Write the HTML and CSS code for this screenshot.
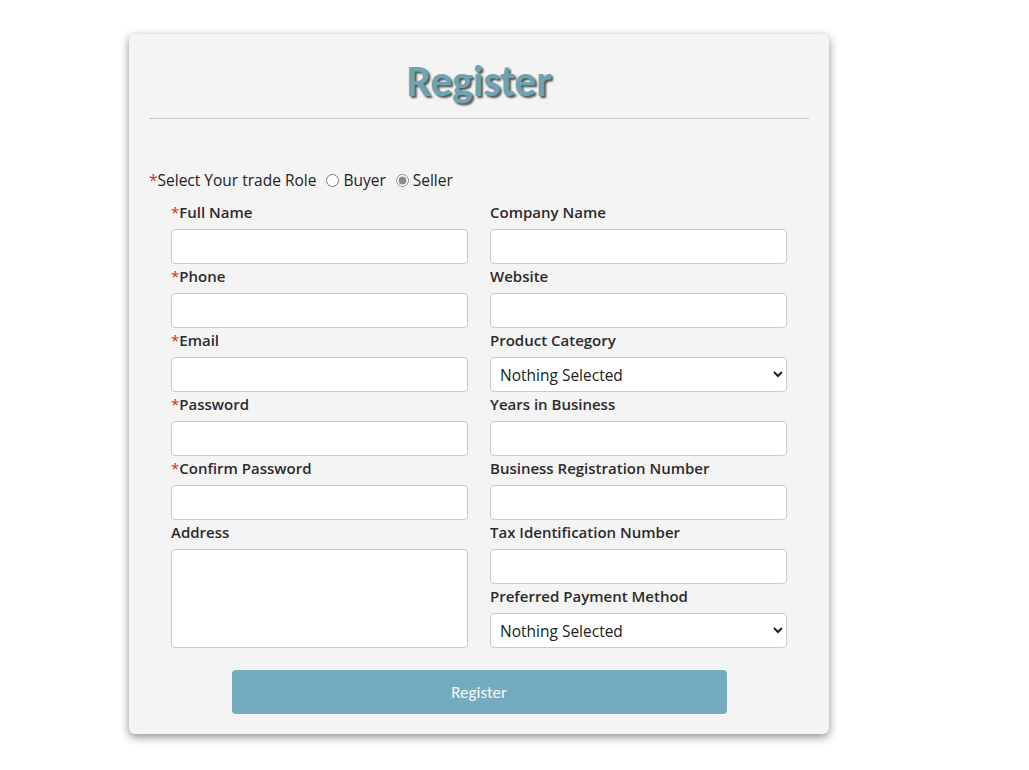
FILE: index.html
```html
<!DOCTYPE html>
<html>
<head>
<meta charset="utf-8">
<link rel="stylesheet" href="styles.css">
</head>
<body>
<div class="card">
  <h1 class="title">Register</h1>
  <hr class="rule">
  <div class="role">
    <span class="req">*</span><span>Select Your trade Role</span>
    <label class="radio"><input type="radio" name="role"> Buyer</label>
    <label class="radio"><input type="radio" name="role" checked> Seller</label>
  </div>
  <div class="grid">
    <div class="col">
      <div class="field"><label class="lbl"><span class="req">*</span>Full Name</label><input class="inp" type="text"></div>
      <div class="field"><label class="lbl"><span class="req">*</span>Phone</label><input class="inp" type="text"></div>
      <div class="field"><label class="lbl"><span class="req">*</span>Email</label><input class="inp" type="text"></div>
      <div class="field"><label class="lbl"><span class="req">*</span>Password</label><input class="inp" type="password"></div>
      <div class="field"><label class="lbl"><span class="req">*</span>Confirm Password</label><input class="inp" type="password"></div>
      <div class="field"><label class="lbl">Address</label><textarea class="inp area"></textarea></div>
    </div>
    <div class="col">
      <div class="field"><label class="lbl">Company Name</label><input class="inp" type="text"></div>
      <div class="field"><label class="lbl">Website</label><input class="inp" type="text"></div>
      <div class="field"><label class="lbl">Product Category</label><select class="inp sel"><option>Nothing Selected</option></select></div>
      <div class="field"><label class="lbl">Years in Business</label><input class="inp" type="text"></div>
      <div class="field"><label class="lbl">Business Registration Number</label><input class="inp" type="text"></div>
      <div class="field"><label class="lbl">Tax Identification Number</label><input class="inp" type="text"></div>
      <div class="field"><label class="lbl">Preferred Payment Method</label><select class="inp sel"><option>Nothing Selected</option></select></div>
    </div>
  </div>
  <div class="actions"><button class="btn">Register</button></div>
</div>
</body>
</html>
```
FILE: styles.css
```css
html, body { margin: 0; padding: 0; background: #fff; }
body {
  font-family: "Open Sans", "Noto Sans", sans-serif;
  color: #222;
  padding: 34px 0 30px 129px;
}
.card {
  width: 700px;
  height: 700px;
  box-sizing: border-box;
  padding: 0 20px;
  background: #f4f4f4;
  border-radius: 6px;
  box-shadow: 0 3px 10px rgba(0,0,0,0.45);
  display: flex;
  flex-direction: column;
}
.title {
  margin: 0;
  padding-top: 22px;
  height: 62px;
  text-align: center;
  font-family: Carlito, Lato, sans-serif;
  font-weight: 700;
  font-size: 44px;
  line-height: 50px;
  color: #6da3b3;
  text-shadow: 2px 2px 2px #555;
  letter-spacing: -0.3px;
}
.rule {
  margin: 0;
  border: 0;
  border-top: 1px solid #c8c8c8;
}
.role {
  margin-top: 49px;
  height: 24px;
  display: flex;
  align-items: center;
  font-size: 15.5px;
  color: #222;
}
.req { color: #d0312d; font-weight: 400; }
.radio { display: flex; align-items: center; margin-left: 10px; }
.radio + .radio { margin-left: 10px; }
.radio input {
  margin: 0 4px 0 0;
  width: 13px;
  height: 13px;
  accent-color: #8a8a8a;
}
.grid {
  display: grid;
  grid-template-columns: 297px 297px;
  column-gap: 22px;
  padding: 0 22px;
  margin-top: 8px;
}
.col { display: flex; flex-direction: column; }
.field { display: flex; flex-direction: column; }
.lbl {
  height: 24px;
  line-height: 24px;
  margin-bottom: 5px;
  font-size: 15px;
  font-weight: 600;
  color: #2b2b2b;
}
.inp {
  height: 35px;
  box-sizing: border-box;
  border: 1px solid #c9c9c9;
  border-radius: 4px;
  background: #fff;
  font-family: "Open Sans", "Noto Sans", sans-serif;
  font-size: 15.5px;
  padding: 0 9px;
  margin: 0;
}
.area { height: 99px; resize: none; }
.sel { color: #222; padding-left: 5px; }
.actions {
  display: flex;
  justify-content: center;
  margin-top: 22px;
}
.btn {
  width: 495px;
  height: 44px;
  border: 0;
  border-radius: 4px;
  background: #74abbf;
  color: #f4f8fa;
  font-family: Carlito, Lato, sans-serif;
  font-size: 17px;
}
```
